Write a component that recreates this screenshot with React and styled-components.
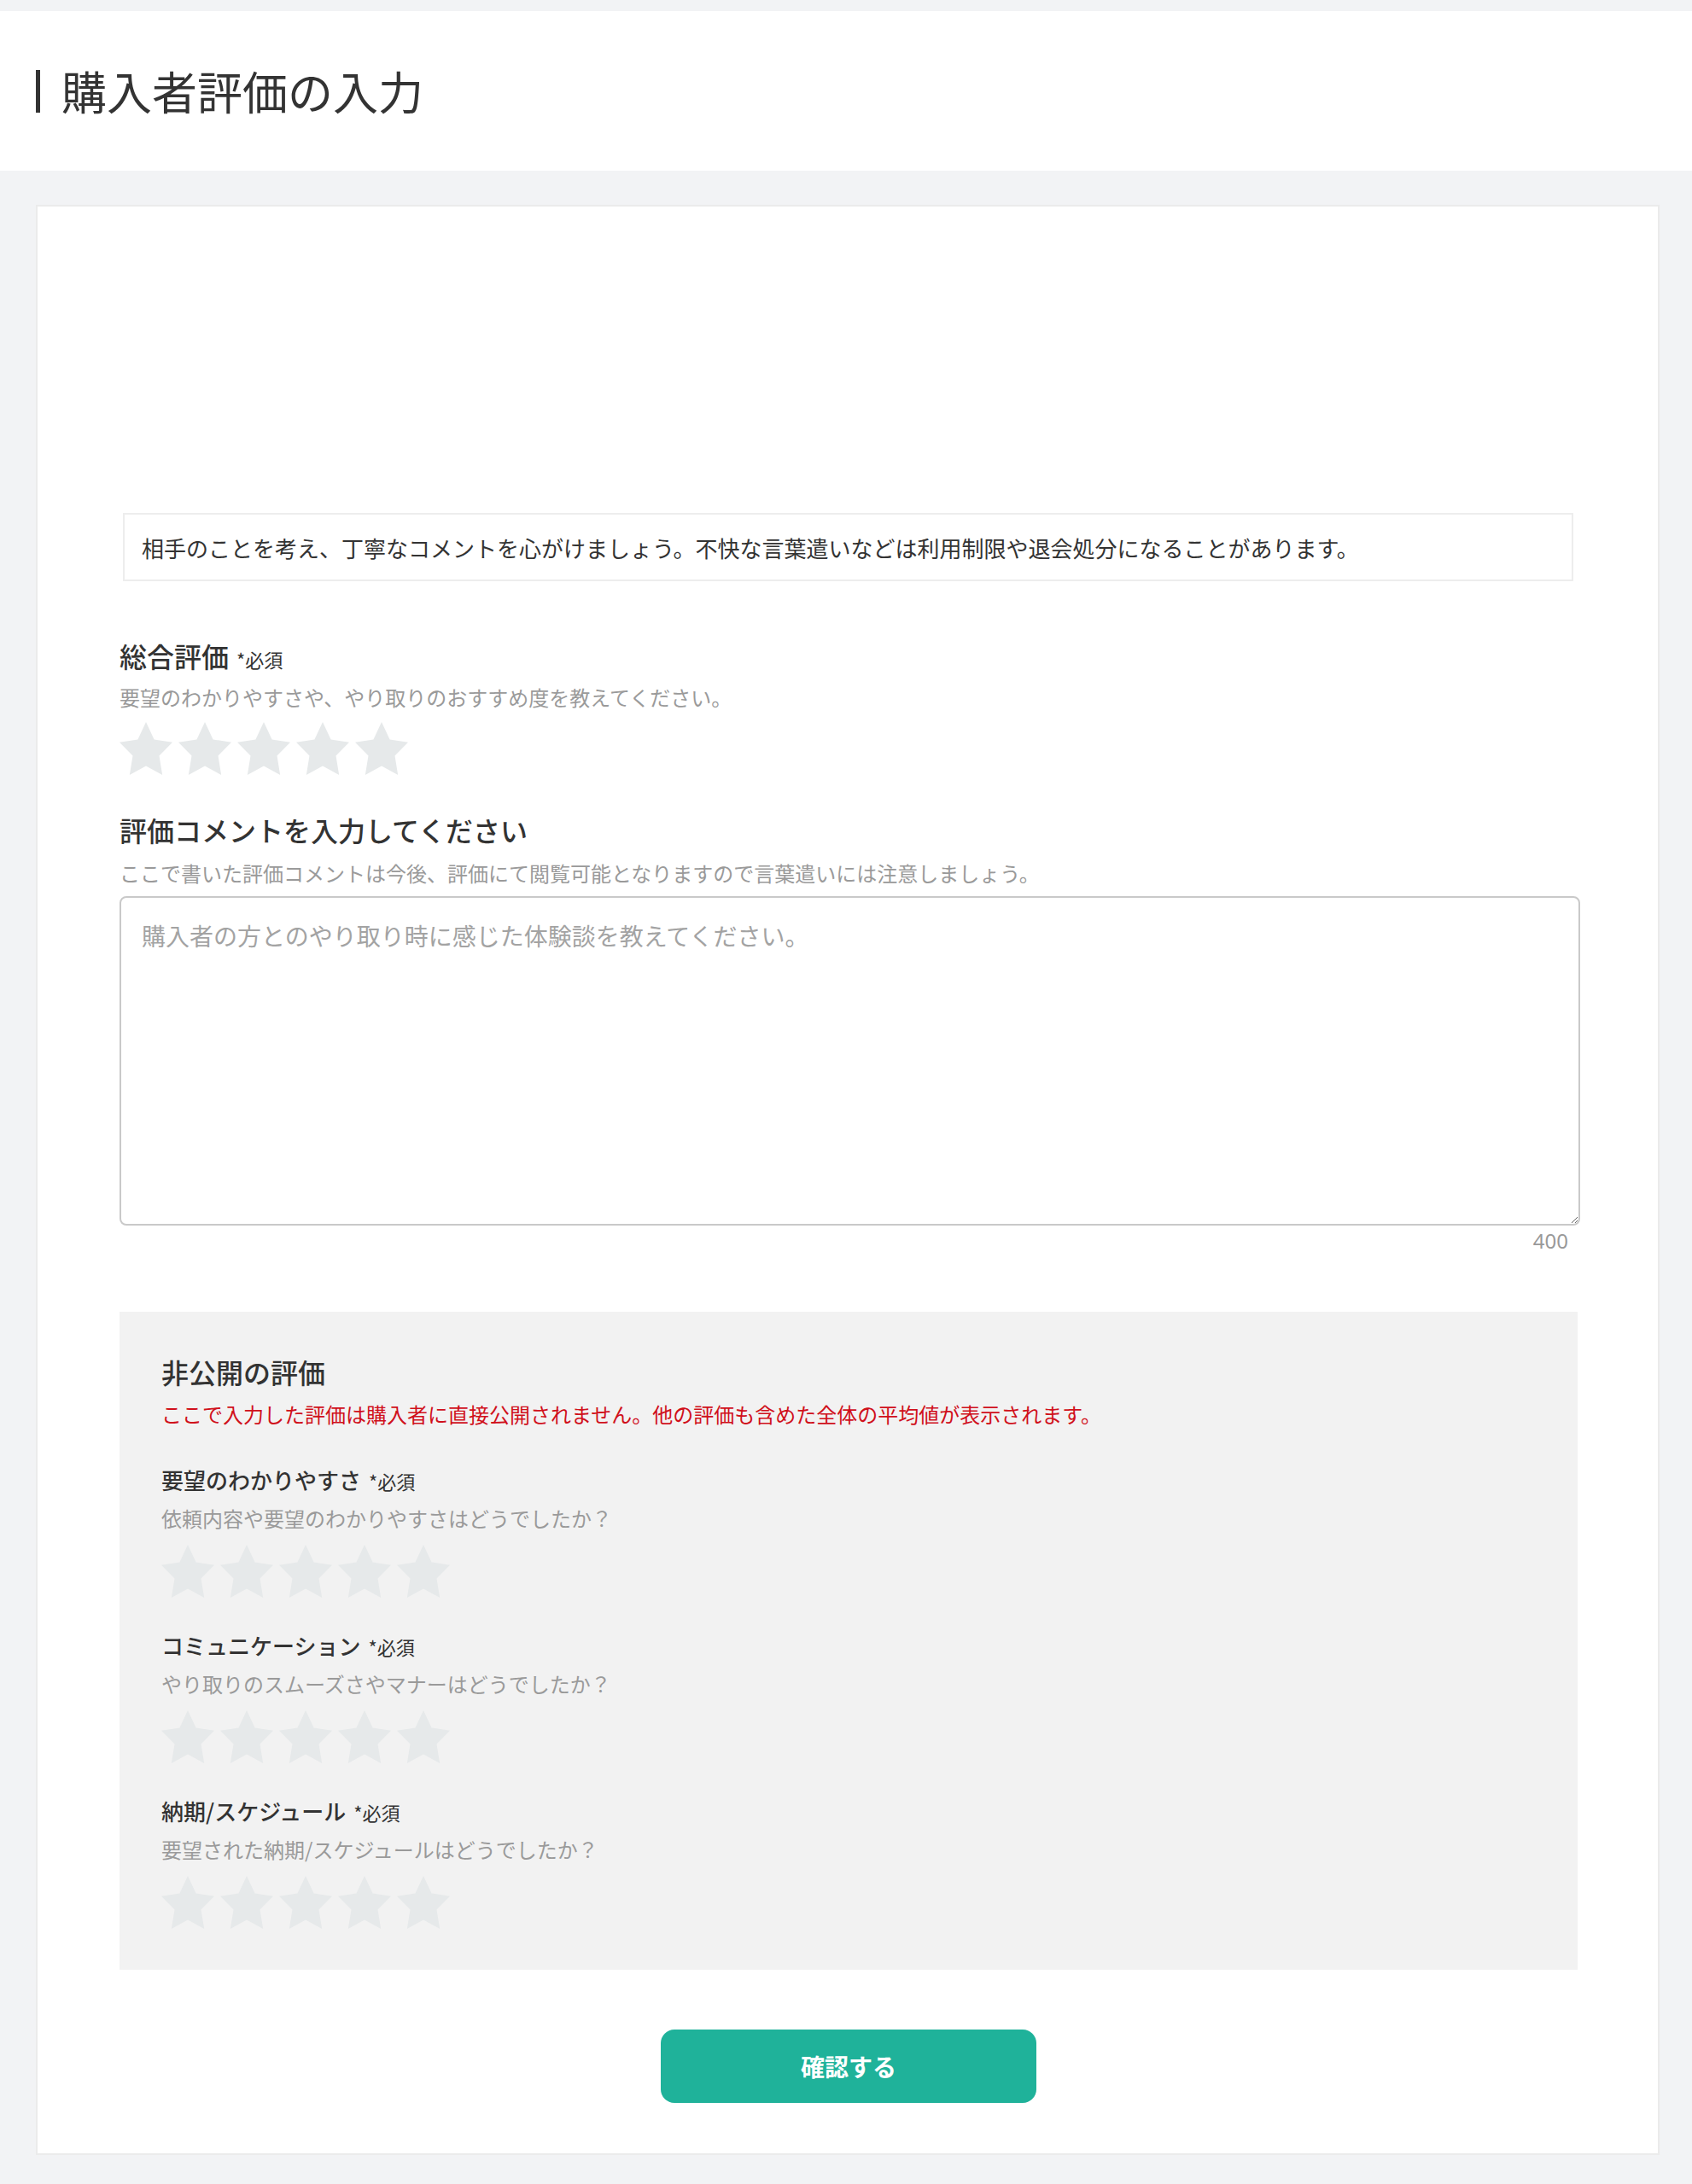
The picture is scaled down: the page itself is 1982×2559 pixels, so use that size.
import React from 'react'
import styled, { createGlobalStyle } from 'styled-components'

const GlobalStyle = createGlobalStyle`
  html, body {
    margin: 0;
    padding: 0;
    background: #f2f3f5;
  }
  body {
    font-family: "Noto Sans CJK JP", "Noto Sans", sans-serif;
    color: #333;
  }
`

const Page = styled.div`
  padding-top: 13px;
  padding-bottom: 33px;
  background: #f2f3f5;
`

const Header = styled.header`
  height: 187px;
  background: #fff;
  display: flex;
  align-items: center;
  padding-left: 42px;
`

const TitleBar = styled.span`
  width: 5px;
  height: 50px;
  background: #333;
  margin-right: 25px;
`

const Title = styled.h1`
  margin: 0;
  font-size: 53px;
  font-weight: 400;
  line-height: 1;
  color: #333;
`

const Card = styled.main`
  margin: 40px 38px 0 42px;
  background: #fff;
  border: 2px solid #ebebeb;
  padding: 359px 94px 59px 96px;
`

const Notice = styled.p`
  margin: 0 5px 0 4px;
  height: 80px;
  box-sizing: border-box;
  border: 2px solid #ededed;
  display: flex;
  align-items: center;
  padding-left: 20px;
  font-size: 26px;
  color: #333;
`

const Heading = styled.h2`
  margin: ${p => p.$top}px 0 0;
  font-size: ${p => p.$size || 32}px;
  line-height: ${p => p.$line || 44}px;
  font-weight: 500;
  color: #333;
  display: flex;
  align-items: baseline;
`

const Required = styled.span`
  font-size: 22px;
  font-weight: 400;
  margin-left: 9px;
  color: #333;
`

const Sub = styled.p`
  margin: ${p => p.$top}px 0 0;
  font-size: 24px;
  line-height: 36px;
  color: ${p => (p.$alert ? '#d0101b' : '#9a9a9a')};
`

const StarRow = styled.div`
  display: flex;
  gap: 7px;
  margin-top: ${p => p.$top}px;
  height: 62px;
`

const Star = styled.svg`
  width: 62px;
  height: 62px;
  fill: #e6e9ea;
`

const TextArea = styled.textarea`
  display: block;
  width: calc(100% + 3px);
  height: 386px;
  margin-top: 9px;
  box-sizing: border-box;
  border: 2px solid #c9c9c9;
  border-radius: 8px;
  padding: 22px 24px;
  font-family: "Noto Sans CJK JP", sans-serif;
  font-size: 28px;
  line-height: 44px;
  color: #333;
  resize: vertical;
  outline: none;

  &::placeholder {
    color: #a3a3a3;
  }
`

const Counter = styled.div`
  margin-top: 3px;
  text-align: right;
  padding-right: 11px;
  font-family: "Noto Sans", sans-serif;
  font-size: 24px;
  line-height: 30px;
  color: #999;
`

const PrivateBox = styled.section`
  margin-top: 68px;
  background: #f2f2f2;
  padding: 48px 40px 48px 49px;
`

const Actions = styled.div`
  display: flex;
  justify-content: center;
  margin-top: 70px;
`

const ConfirmButton = styled.button`
  width: 440px;
  height: 86px;
  border: none;
  border-radius: 16px;
  background: #1fb29a;
  color: #fff;
  font-family: "Noto Sans CJK JP", sans-serif;
  font-size: 28px;
  font-weight: 700;
  cursor: pointer;
`

const Stars = ({ top }) => (
  <StarRow $top={top}>
    {[0, 1, 2, 3, 4].map(i => (
      <Star key={i} viewBox="2 1.5 20 19.02" preserveAspectRatio="none">
        <path d="M12 1.5l3.09 6.26L22 8.77l-5 4.87 1.18 6.88L12 17.27l-6.18 3.25L7 13.64 2 8.77l6.91-1.01z" />
      </Star>
    ))}
  </StarRow>
)

const privateItems = [
  { label: '要望のわかりやすさ', sub: '依頼内容や要望のわかりやすさはどうでしたか？' },
  { label: 'コミュニケーション', sub: 'やり取りのスムーズさやマナーはどうでしたか？' },
  { label: '納期/スケジュール', sub: '要望された納期/スケジュールはどうでしたか？' },
]

export default function App() {
  return (
    <>
      <GlobalStyle />
      <Page>
        <Header>
          <TitleBar />
          <Title>購入者評価の入力</Title>
        </Header>
        <Card>
          <Notice>
            相手のことを考え、丁寧なコメントを心がけましょう。不快な言葉遣いなどは利用制限や退会処分になることがあります。
          </Notice>

          <Heading $top={65}>
            総合評価<Required>*必須</Required>
          </Heading>
          <Sub $top={5}>要望のわかりやすさや、やり取りのおすすめ度を教えてください。</Sub>
          <Stars top={11} />

          <Heading $top={42}>評価コメントを入力してください</Heading>
          <Sub $top={11}>
            ここで書いた評価コメントは今後、評価にて閲覧可能となりますので言葉遣いには注意しましょう。
          </Sub>
          <TextArea placeholder="購入者の方とのやり取り時に感じた体験談を教えてください。" />
          <Counter>400</Counter>

          <PrivateBox>
            <Heading $top={0}>非公開の評価</Heading>
            <Sub $top={10} $alert>
              ここで入力した評価は購入者に直接公開されません。他の評価も含めた全体の平均値が表示されます。
            </Sub>
            {privateItems.map((item, i) => (
              <div key={item.label}>
                <Heading $top={i === 0 ? 41 : 38} $size={26} $line={36}>
                  {item.label}
                  <Required>*必須</Required>
                </Heading>
                <Sub $top={8}>{item.sub}</Sub>
                <Stars top={13} />
              </div>
            ))}
          </PrivateBox>

          <Actions>
            <ConfirmButton>確認する</ConfirmButton>
          </Actions>
        </Card>
      </Page>
    </>
  )
}
